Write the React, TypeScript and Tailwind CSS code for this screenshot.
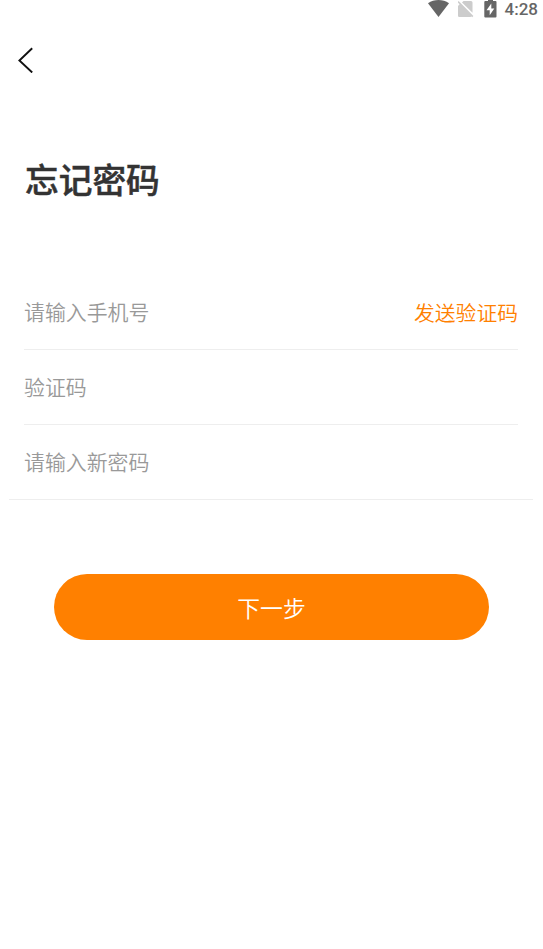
interface Field {
  id: string;
  placeholder: string;
  type: string;
  action?: string;
  row: string;
}

const fields: Field[] = [
  { id: "phone", placeholder: "请输入手机号", type: "tel", action: "发送验证码", row: "ml-6 mr-[25px]" },
  { id: "code", placeholder: "验证码", type: "text", row: "ml-6 mr-[25px]" },
  { id: "password", placeholder: "请输入新密码", type: "password", row: "ml-[9px] mr-2.5 pl-[15px]" },
];

const StatusBar = () => (
  <div className="flex h-5 items-start justify-end pr-[5px] text-[#666666]">
    <svg className="mr-2 h-[18px] w-[22px]" viewBox="0 0 22 18" fill="currentColor">
      <path d="M0 3.2C6-1 15-1 21 3.2L10.5 17Z" />
    </svg>
    <svg className="mr-2.5 h-[18px] w-4" viewBox="0 0 16 18" fill="#cccccc">
      <path d="M5.5 1H13Q14.5 1 14.5 2.5V12.8L4 2.6Z" />
      <path d="M-0.5 2.2L0.6 1L15.4 16L14.2 17.2L13.6 16.6Q13 17 12.3 17H1.3Q0 17 0 15.7V6L1.6 4.3Z" />
    </svg>
    <svg className="mr-2 h-[18px] w-[13px]" viewBox="0 0 13 18" fill="currentColor">
      <path d="M4 0H9V1H11.5Q12.5 1 12.5 2V16.5Q12.5 17.5 11.5 17.5H1.3Q0.3 17.5 0.3 16.5V2Q0.3 1 1.3 1H4Z" />
      <path d="M7.3 3.5L2.5 10.2H5.7V15.2L10.3 8.4H7.3Z" fill="white" />
    </svg>
    <span className="font-[Roboto] text-[17px] font-medium leading-[19px]">4:28</span>
  </div>
);

export default function App() {
  return (
    <main className="h-[949px] w-[543px] overflow-hidden bg-white font-['Noto_Sans_CJK_SC',sans-serif]">
      <StatusBar />
      <header className="flex h-20 items-center pl-[18px]">
        <button aria-label="返回">
          <svg className="h-[26px] w-[15px]" viewBox="0 0 15 26" fill="none" stroke="#111111" strokeWidth="1.9">
            <path d="M14.2 1.3L1.4 13.5L14.2 25.5" />
          </svg>
        </button>
      </header>
      <h1 className="ml-[25px] mt-[54px] text-[33.7px] font-medium leading-[50px] text-[#333333] [-webkit-text-stroke:0.5px_#333333]">
        忘记密码
      </h1>
      <form className="mt-[71px]">
        {fields.map((field) => (
          <div key={field.id} className={`flex h-[75px] items-center border-b border-[#eeeeee] ${field.row}`}>
            <input
              type={field.type}
              placeholder={field.placeholder}
              className="min-w-0 flex-1 text-[20.9px] font-[350] outline-none placeholder:text-[#999999]"
            />
            {field.action && (
              <button type="button" className="pt-0.5 text-[20.8px] font-[350] text-[#ff8000]">
                {field.action}
              </button>
            )}
          </div>
        ))}
        <button
          type="button"
          className="ml-[54px] mt-[74px] block h-[66px] w-[435px] rounded-full bg-[#ff8000] pt-0.5 text-[22.8px] font-[350] text-white"
        >
          下一步
        </button>
      </form>
    </main>
  );
}
